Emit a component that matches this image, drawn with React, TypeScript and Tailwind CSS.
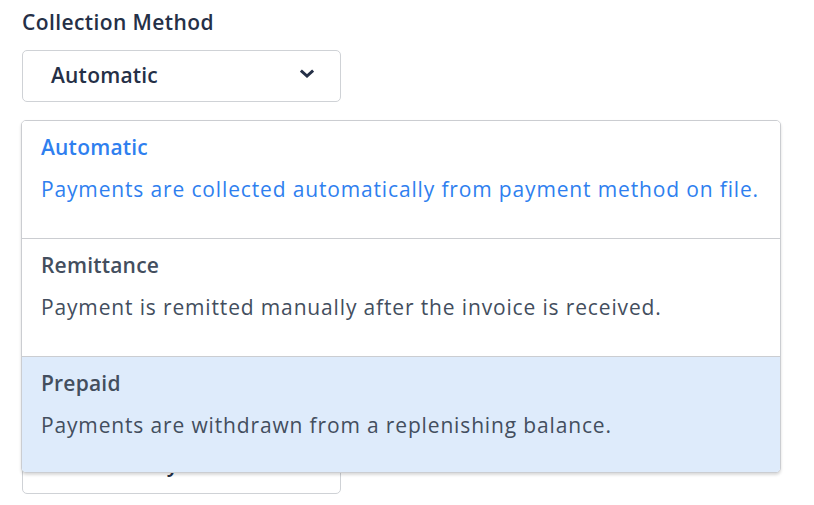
import React from "react";

const options = [
  { title: "Automatic", desc: "Payments are collected automatically from payment method on file.", state: "selected" },
  { title: "Remittance", desc: "Payment is remitted manually after the invoice is received.", state: "normal" },
  { title: "Prepaid", desc: "Payments are withdrawn from a replenishing balance.", state: "hover" },
];

const heights = ["h-[117px]", "h-[118px]", "h-[116px]"];

export default function App() {
  return (
    <div className="relative w-[814px] h-[505px] bg-white overflow-hidden" style={{ fontFamily: "'Open Sans', Lato, sans-serif" }}>
      <div className="pl-[22px] pt-[8px] flex flex-col">
        <div className="text-[21px] font-semibold text-[#253047] leading-[28px] tracking-[0.4px]">Collection Method</div>
        <div className="mt-[14px] w-[319px] h-[52px] border border-[#cfd2d6] rounded-[5px] flex items-center justify-between pl-[28px] pr-[26px]">
          <span className="text-[21px] font-semibold text-[#253047] leading-[26px] -mt-[3px] tracking-[0.2px]">Automatic</span>
          <svg width="14" height="10" viewBox="0 0 14 10" className="-mt-[4px]">
            <path d="M2 2.5 L7 7 L12 2.5" stroke="#253047" strokeWidth="3" fill="none" strokeLinecap="square" />
          </svg>
        </div>
        <div className="mt-[340px] w-[319px] h-[52px] border border-[#cfd2d6] rounded-[5px] flex items-center pl-[28px]">
          <span className="text-[21px] font-semibold text-[#253047] leading-[26px] -mt-[9px]">Immediately</span>
        </div>
      </div>
      <div className="absolute left-[21px] top-[120px] w-[760px] border border-[#cbcdd1] rounded-[5px] bg-white shadow-[0_2px_3px_rgba(0,0,0,0.15)] overflow-hidden">
        {options.map((o, i) => (
          <div
            key={o.title}
            className={
              "px-[19px] pt-[12px] flex flex-col " +
              (i > 0 ? "border-t border-[#cbcdd1] " : "") +
              heights[i] + " " +
              (o.state === "hover" ? "bg-[#deebfb]" : "bg-white")
            }
          >
            <div className={"text-[21px] font-semibold leading-[28px] tracking-[0.2px] " + (o.state === "selected" ? "text-[#2f7fef]" : "text-[#434e5e]")}>
              {o.title}
            </div>
            <div className={"mt-[14px] text-[21px] leading-[28px] tracking-[0.85px] " + (o.state === "selected" ? "text-[#2f7fef]" : "text-[#434e5e]")}>
              {o.desc}
            </div>
          </div>
        ))}
      </div>
    </div>
  );
}
